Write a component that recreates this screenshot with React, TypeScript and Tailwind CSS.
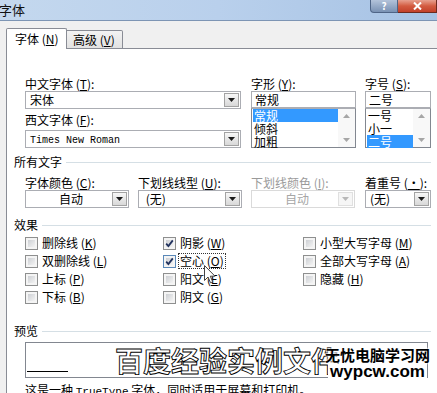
import React from "react";

function U({ c }: { c: string }) {
  return (
    <>
      (<span className="underline underline-offset-[1px]">{c}</span>)
    </>
  );
}

function Arrow({ disabled }: { disabled?: boolean }) {
  return (
    <svg width="7" height="4" viewBox="0 0 7 4">
      <path d="M0 0H7L3.5 4Z" fill={disabled ? "#b8b8b8" : "#1a1a1a"} />
    </svg>
  );
}

function DropBtn({ disabled }: { disabled?: boolean }) {
  return (
    <div
      className={
        "w-[15px] h-[14px] mr-[1px] flex items-center justify-center border " +
        (disabled
          ? "border-[#e0e0e0] bg-[#f6f6f6]"
          : "border-[#a3a3a3] bg-gradient-to-b from-[#f7f7f7] to-[#d8d8d8]")
      }
    >
      <Arrow disabled={disabled} />
    </div>
  );
}

function Combo({
  className,
  children,
  disabled,
  center,
}: {
  className: string;
  children: React.ReactNode;
  disabled?: boolean;
  center?: boolean;
}) {
  return (
    <div
      className={
        "h-[18px] border bg-white flex items-center " +
        (disabled ? "border-[#dadada] text-[#a6a6a6] " : "border-[#abadb3] ") +
        className
      }
    >
      <div className={"flex-1 pl-[4px] leading-[16px] " + (center ? "text-center" : "")}>{children}</div>
      <DropBtn disabled={disabled} />
    </div>
  );
}

function Input({ className, children }: { className: string; children: React.ReactNode }) {
  return (
    <div className={"h-[17px] border border-[#abadb3] bg-white pl-[3px] leading-[15px] " + className}>
      {children}
    </div>
  );
}

function ListBox({ items, sel, className }: { items: string[]; sel: number; className: string }) {
  return (
    <div className={"h-[40px] border border-[#828790] border-t-[#abadb3] bg-white flex " + className}>
      <div className="flex-1 flex flex-col pl-[1px]">
        {items.map((t, i) => (
          <div
            key={t}
            className={"h-[13px] leading-[13px] pl-[1px] " + (i === sel ? "bg-[#3399ff] text-white" : "text-black")}
          >
            {t}
          </div>
        ))}
      </div>
      <div className="w-[17px] bg-[#f8f8f8] flex flex-col justify-between items-center py-[5px]">
        <svg width="7" height="4" viewBox="0 0 7 4">
          <path d="M0 4H7L3.5 0Z" fill="#a6a6a6" />
        </svg>
        <svg width="7" height="4" viewBox="0 0 7 4">
          <path d="M0 0H7L3.5 4Z" fill="#a6a6a6" />
        </svg>
      </div>
    </div>
  );
}

function Check({ checked, hover }: { checked?: boolean; hover?: boolean }) {
  return (
    <div
      className={
        "relative w-[13px] h-[13px] border bg-[#f4f4f4] p-[2px] " +
        (hover ? "border-[#5a88b8]" : "border-[#8e8f8f]")
      }
    >
      <div className="w-full h-full bg-gradient-to-br from-[#cdd0d4] to-[#f3f3f3]" />
      {checked && (
        <svg className="absolute left-[1px] top-[1px]" width="9" height="9" viewBox="0 0 9 9">
          <path d="M1.2 4.6L3.4 7L7.8 1.4" fill="none" stroke="#21325e" strokeWidth="1.8" />
        </svg>
      )}
    </div>
  );
}

function CheckRow({
  label,
  checked,
  hover,
  focus,
}: {
  label: React.ReactNode;
  checked?: boolean;
  hover?: boolean;
  focus?: boolean;
}) {
  return (
    <div className="h-[18px] flex items-center">
      <Check checked={checked} hover={hover} />
      <span
        className={
          "ml-[2px] px-[1px] leading-[14px] border " + (focus ? "border-dotted border-[#333]" : "border-transparent")
        }
      >
        {label}
      </span>
    </div>
  );
}

function Section({ title }: { title: string }) {
  return (
    <div className="h-[14px] flex items-center pl-[7px]">
      <span className="leading-[14px]">{title}</span>
      <div className="flex-1 h-px bg-[#d5dfe5] ml-[4px]" />
    </div>
  );
}

export default function App() {
  return (
    <div className="relative w-[437px] h-[393px] overflow-hidden bg-[#f0f0f0] text-[12px] text-black [font-family:'Noto_Sans_CJK_SC','Noto_Sans',sans-serif]">
      {/* title bar */}
      <div className="h-[21px] flex justify-between bg-gradient-to-r from-[#c4d8ee] via-[#b9d0ec] to-[#a6c2e4] border-b border-[#7d95b4]">
        <span className="-ml-[1px] pt-[2px] leading-[15px] text-[13px] text-[#111]">字体</span>
        <div className="flex h-[13px]">
          <div className="w-[28px] h-[13px] flex items-center justify-center rounded-bl-[4px] border border-t-0 border-[#4f6587] bg-gradient-to-b from-[#b3c3da] to-[#7a92b4] text-white font-bold text-[10px] leading-[10px]">
            ?
          </div>
          <div className="w-[39px] h-[13px] flex items-center justify-center border border-t-0 border-l-0 border-[#6d2a1f] bg-gradient-to-b from-[#e7a08f] via-[#d35b40] to-[#c2402a]">
            <svg width="9" height="8" viewBox="0 0 9 8">
              <path d="M1 0.5L8 7.5M8 0.5L1 7.5" stroke="#fff" strokeWidth="2" />
            </svg>
          </div>
        </div>
      </div>

      {/* body */}
      <div className="pt-[7px] pl-[6px] flex flex-col">
        {/* tabs */}
        <div className="relative z-10 h-[21px] -mb-[1px] flex items-end">
          <div className="w-[61px] h-[21px] border border-b-0 border-[#898c95] rounded-t-[2px] bg-white pl-[8px] pt-[3px] leading-[14px]">
            字体 <U c="N" />
          </div>
          <div className="w-[56px] h-[19px] border border-l-0 border-[#898c95] rounded-tr-[2px] bg-gradient-to-b from-[#f3f3f3] to-[#e2e2e2] pl-[6px] pt-[2px] leading-[14px]">
            高级 <U c="V" />
          </div>
        </div>

        {/* panel */}
        <div className="w-[440px] h-[400px] border-t border-l border-[#898c95] bg-white pt-[27px]">
          <div className="w-[424px] flex flex-col">
            {/* font rows */}
            <div className="flex pl-[18px]">
              <div className="w-[216px] flex flex-col">
                <div className="h-[15px] leading-[15px]">
                  中文字体 <U c="T" />:
                </div>
                <Combo className="w-[216px] h-[17px]">宋体</Combo>
                <div className="h-[21px] flex items-center">
                  西文字体 <U c="F" />:
                </div>
                <Combo className="w-[216px]">
                  <span className="[font-family:'Liberation_Mono',monospace] text-[10px]">Times New Roman</span>
                </Combo>
              </div>
              <div className="w-[105px] ml-[10px] flex flex-col">
                <div className="h-[15px] leading-[15px]">
                  字形 <U c="Y" />:
                </div>
                <Input className="w-[105px]">常规</Input>
                <ListBox className="w-[105px]" items={["常规", "倾斜", "加粗"]} sel={0} />
              </div>
              <div className="w-[66px] ml-[9px] flex flex-col">
                <div className="h-[15px] leading-[15px]">
                  字号 <U c="S" />:
                </div>
                <Input className="w-[66px]">二号</Input>
                <ListBox className="w-[66px]" items={["一号", "小一", "二号"]} sel={2} />
              </div>
            </div>

            {/* 所有文字 */}
            <div className="mt-[7px]">
              <Section title="所有文字" />
            </div>
            <div className="mt-[6px] flex pl-[18px]">
              <div className="w-[104px] flex flex-col">
                <div className="h-[15px] leading-[15px]">
                  字体颜色 <U c="C" />:
                </div>
                <Combo className="w-[104px]" center>
                  自动
                </Combo>
              </div>
              <div className="w-[104px] ml-[9px] flex flex-col">
                <div className="h-[15px] leading-[15px]">
                  下划线线型 <U c="U" />:
                </div>
                <Combo className="w-[104px]">&nbsp;(无)</Combo>
              </div>
              <div className="w-[104px] ml-[9px] flex flex-col">
                <div className="h-[15px] leading-[15px] text-[#9a9a9a]">
                  下划线颜色 <U c="I" />:
                </div>
                <Combo className="w-[104px]" center disabled>
                  自动
                </Combo>
              </div>
              <div className="w-[66px] ml-[10px] flex flex-col">
                <div className="h-[15px] leading-[15px] whitespace-nowrap">
                  着重号 <U c="·" />:
                </div>
                <Combo className="w-[66px]">(无)</Combo>
              </div>
            </div>

            {/* 效果 */}
            <div className="mt-[10px]">
              <Section title="效果" />
            </div>
            <div className="mt-[2px] flex pl-[18px]">
              <div className="w-[138px] flex flex-col">
                <CheckRow label={<>删除线 <U c="K" /></>} />
                <CheckRow label={<>双删除线 <U c="L" /></>} />
                <CheckRow label={<>上标 <U c="P" /></>} />
                <CheckRow label={<>下标 <U c="B" /></>} />
              </div>
              <div className="w-[140px] flex flex-col">
                <CheckRow label={<>阴影 <U c="W" /></>} checked />
                <CheckRow label={<>空心 <U c="O" /></>} checked hover focus />
                <CheckRow label={<>阳文 <U c="E" /></>} />
                <CheckRow label={<>阴文 <U c="G" /></>} />
              </div>
              <div className="flex flex-col">
                <CheckRow label={<>小型大写字母 <U c="M" /></>} />
                <CheckRow label={<>全部大写字母 <U c="A" /></>} />
                <CheckRow label={<>隐藏 <U c="H" /></>} />
              </div>
            </div>

            {/* 预览 */}
            <div className="mt-[18px]">
              <Section title="预览" />
            </div>
            <div className="ml-[18px] mt-[4px] relative w-[403px] h-[36px] border border-[#828790] bg-white flex items-center">
              <div className="self-end mb-[5px] ml-[1px] w-[41px] h-px bg-black" />
              <div className="ml-[47px] text-[28px] leading-[32px] font-bold text-white [-webkit-text-stroke:0.9px_#000] whitespace-nowrap">
                百度经验实例文件
              </div>
              <div className="absolute right-[-3px] top-[3px] flex flex-col items-center">
                <div className="text-[15px] font-bold leading-[18px] whitespace-nowrap [text-shadow:0_0_2px_#fff,0_0_2px_#fff,0_0_3px_#fff]">
                  无忧电脑学习网
                </div>
                <div className="bg-white px-[2px] text-[17px] font-bold leading-[15px] [font-family:'Liberation_Sans',Arial,sans-serif]">
                  wypcw.com
                </div>
              </div>
            </div>
            <div className="pl-[18px] mt-[4px] leading-[15px] whitespace-nowrap">
              这是一种 <span className="[font-family:'Liberation_Mono',monospace] text-[11px]">TrueType</span>{" "}
              字体，同时适用于屏幕和打印机。
            </div>
          </div>
        </div>
      </div>

      {/* mouse cursor */}
      <svg className="absolute left-[204px] top-[265px]" width="12" height="19" viewBox="0 0 12 19">
        <path
          d="M0.5 0.5L0.5 15.5L4 12L6.5 17.8L8.7 16.8L6.3 11.2L11 11.2Z"
          fill="#fff"
          stroke="#444"
          strokeWidth="1"
          strokeLinejoin="round"
        />
      </svg>
    </div>
  );
}
